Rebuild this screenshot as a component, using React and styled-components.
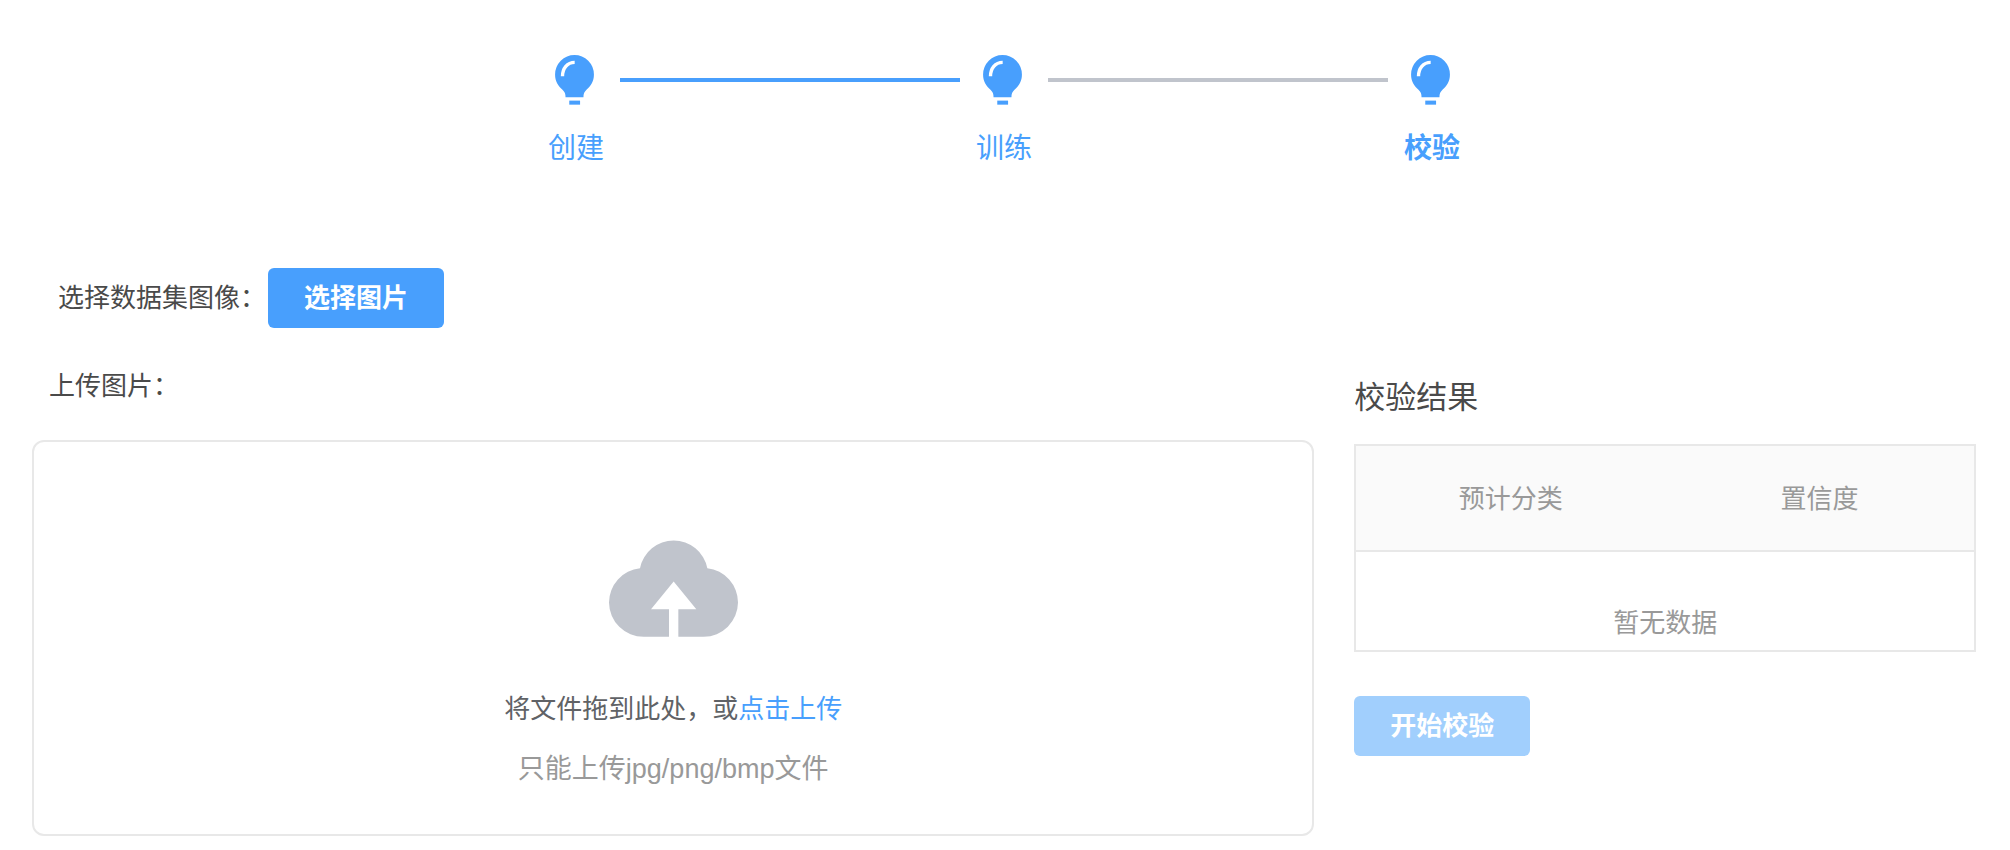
import styled, { createGlobalStyle } from "styled-components";

const GlobalStyle = createGlobalStyle`
  :root {
    --color-primary: #489ffd;
    --color-primary-light: #a1cffd;
    --color-text: #4a4a4a;
    --color-text-regular: #606266;
    --color-text-light: #999;
    --color-icon: #c0c4cc;
    --color-border: #e8e8e8;
    --color-header: #fafafa;
  }

  * {
    box-sizing: border-box;
    margin: 0;
    padding: 0;
  }

  body {
    background-color: #fff;
    color: var(--color-text);
    font-family: "Liberation Sans", "Noto Sans CJK SC", sans-serif;
    font-size: 26px;
    line-height: 40px;
  }
`;

const Page = styled.main`
  padding: 55px 34px 14px 32px;
`;

const Steps = styled.ol`
  display: flex;
  gap: 16px;
  max-width: 912px;
  margin: 0 auto;
  list-style: none;
`;

const Step = styled.li`
  display: flex;
  flex-direction: column;
  gap: 24px;
  color: var(--color-primary);
  font-size: 28px;
  font-weight: ${(props) => (props.$current ? 700 : 400)};
`;

const StepIcon = styled.span`
  display: flex;
  justify-content: center;
  width: 52px;
`;

const StepLine = styled.li`
  flex: 1;
  height: 4px;
  margin-top: 23px;
  background-color: ${(props) =>
    props.$done ? "var(--color-primary)" : "var(--color-icon)"};
`;

const Button = styled.button`
  height: 60px;
  padding: 0 36px;
  border: none;
  border-radius: 6px;
  background-color: var(--color-primary);
  color: #fff;
  font-family: inherit;
  font-size: 26px;
  font-weight: 700;
  line-height: 40px;
  cursor: pointer;

  &:disabled {
    background-color: var(--color-primary-light);
    cursor: not-allowed;
  }
`;

const SelectRow = styled.div`
  display: flex;
  align-items: center;
  gap: 2px;
  margin-top: 99px;
  padding-left: 26px;
`;

const Content = styled.div`
  display: grid;
  grid-template-columns: 33fr 16fr;
  align-items: start;
  gap: 40px;
  margin-top: 38px;
`;

const UploadTitle = styled.p`
  padding-left: 17px;
`;

const UploadArea = styled.label`
  display: flex;
  flex-direction: column;
  align-items: center;
  margin-top: 34px;
  padding: 98px 20px 45px;
  border: 2px solid var(--color-border);
  border-radius: 12px;
  cursor: pointer;
`;

const UploadText = styled.span`
  margin-top: 52px;
  color: var(--color-text-regular);
`;

const Highlight = styled.span`
  color: var(--color-primary);
`;

const UploadTip = styled.span`
  margin-top: 20px;
  color: var(--color-text-light);
  font-size: 27px;
`;

const HiddenInput = styled.input`
  display: none;
`;

const ResultTitle = styled.h2`
  margin-top: 12px;
  font-size: 31px;
  font-weight: 400;
`;

const Table = styled.table`
  width: 100%;
  margin: 26px 0 44px;
  border: 2px solid var(--color-border);
  border-spacing: 0;
  table-layout: fixed;
  color: var(--color-text-light);
  text-align: center;
`;

const HeadCell = styled.th`
  padding: 33px 20px 31px;
  border-bottom: 2px solid var(--color-border);
  background-color: var(--color-header);
  font-weight: 400;
`;

const EmptyCell = styled.td`
  padding: 51px 20px 7px;
`;

function BulbIcon() {
  return (
    <svg width="39" height="50" viewBox="0 0 115 148" aria-hidden="true">
      <path
        fill="currentColor"
        d="M57.5 0A57.5 57.5 0 0 1 115 57.5C115 78 106 91 93 103C86 110 84 115 84 125H31C31 115 29 110 22 103C9 91 0 78 0 57.5A57.5 57.5 0 0 1 57.5 0Z"
      />
      <path fill="none" stroke="#fff" strokeWidth="10" d="M22 63C22 40 36 22 58 22" />
      <path fill="currentColor" d="M42 135h32v12H42z" />
    </svg>
  );
}

function CloudIcon() {
  return (
    <svg width="129" height="97" viewBox="0 0 387 290" aria-hidden="true">
      <path
        fill="#c0c4cc"
        d="M93 84A103 103 0 0 1 295 84A104 104 0 0 1 387 187A104 104 0 0 1 284 290H208V207H262L194 124L126 207H180V290H104A104 104 0 0 1 0 187A104 104 0 0 1 93 84Z"
      />
    </svg>
  );
}

function App() {
  return (
    <>
      <GlobalStyle />

      <Page lang="zh-CN">
        <Steps>
          <Step>
            <StepIcon>
              <BulbIcon />
            </StepIcon>
            <span>创建</span>
          </Step>
          <StepLine $done aria-hidden="true" />
          <Step>
            <StepIcon>
              <BulbIcon />
            </StepIcon>
            <span>训练</span>
          </Step>
          <StepLine aria-hidden="true" />
          <Step $current aria-current="step">
            <StepIcon>
              <BulbIcon />
            </StepIcon>
            <span>校验</span>
          </Step>
        </Steps>

        <SelectRow>
          <span id="dataset-label">选择数据集图像：</span>
          <Button type="button" aria-describedby="dataset-label">
            选择图片
          </Button>
        </SelectRow>

        <Content>
          <section>
            <UploadTitle>上传图片：</UploadTitle>
            <UploadArea>
              <HiddenInput type="file" accept=".jpg,.png,.bmp" />
              <CloudIcon />
              <UploadText>
                将文件拖到此处，或<Highlight>点击上传</Highlight>
              </UploadText>
              <UploadTip>只能上传jpg/png/bmp文件</UploadTip>
            </UploadArea>
          </section>

          <section>
            <ResultTitle>校验结果</ResultTitle>
            <Table>
              <thead>
                <tr>
                  <HeadCell scope="col">预计分类</HeadCell>
                  <HeadCell scope="col">置信度</HeadCell>
                </tr>
              </thead>
              <tbody>
                <tr>
                  <EmptyCell colSpan={2}>暂无数据</EmptyCell>
                </tr>
              </tbody>
            </Table>
            <Button type="button" disabled>
              开始校验
            </Button>
          </section>
        </Content>
      </Page>
    </>
  );
}

export default App;
